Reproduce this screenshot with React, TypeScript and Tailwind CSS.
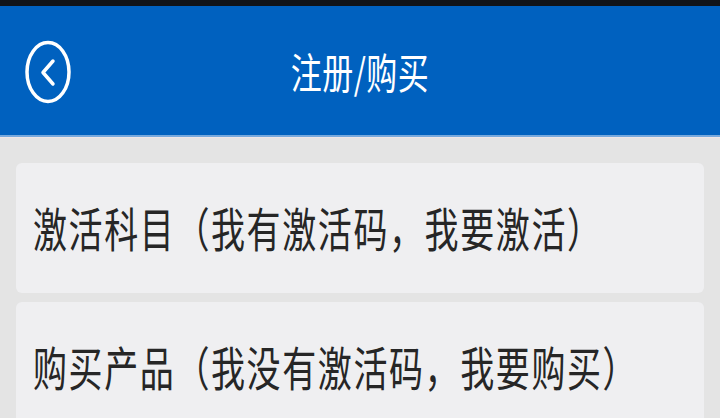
const items = [
  "激活科目（我有激活码，我要激活）",
  "购买产品（我没有激活码，我要购买）",
];

const BackIcon = () => (
  <svg width="50" height="66" viewBox="0 0 50 66" fill="none">
    <ellipse cx="25" cy="33" rx="21" ry="29.5" stroke="white" strokeWidth="3.5" />
    <path d="M30 22 L20 33.5 L30 45" stroke="white" strokeWidth="3.5" strokeLinecap="round" strokeLinejoin="round" />
  </svg>
);

export default function App() {
  return (
    <div
      className="w-[720px] h-[418px] overflow-hidden bg-[#e4e4e4] flex flex-col"
      style={{ fontFamily: '"Noto Sans CJK SC", "Noto Sans", sans-serif' }}
    >
      {/* status bar */}
      <div className="h-[6px] bg-[#111418] shrink-0" />

      {/* header */}
      <div className="h-[129px] shrink-0 bg-[#0061bf] grid grid-cols-[1fr_auto_1fr] items-center">
        <div className="pl-[23px] pt-[3px] flex items-center">
          <BackIcon />
        </div>
        <h1 className="text-white text-[31px] leading-none scale-y-[1.35] tracking-[0.5px]">注册/购买</h1>
        <div />
      </div>
      <div className="h-[2px] bg-[#77a9dd] shrink-0" />
      <div className="h-[1px] bg-[#f0e6e6] shrink-0" />

      {/* options */}
      <div className="flex flex-col gap-[9px] px-[16px] pt-[25px]">
        {items.map((label) => (
          <div
            key={label}
            className="h-[130px] shrink-0 rounded-[6px] bg-[#efeff1] flex items-center pl-[17px]"
          >
            <span className="text-[34px] leading-none text-[#262626] scale-y-[1.38] whitespace-nowrap tracking-[1.6px]">
              {label}
            </span>
          </div>
        ))}
      </div>
    </div>
  );
}
